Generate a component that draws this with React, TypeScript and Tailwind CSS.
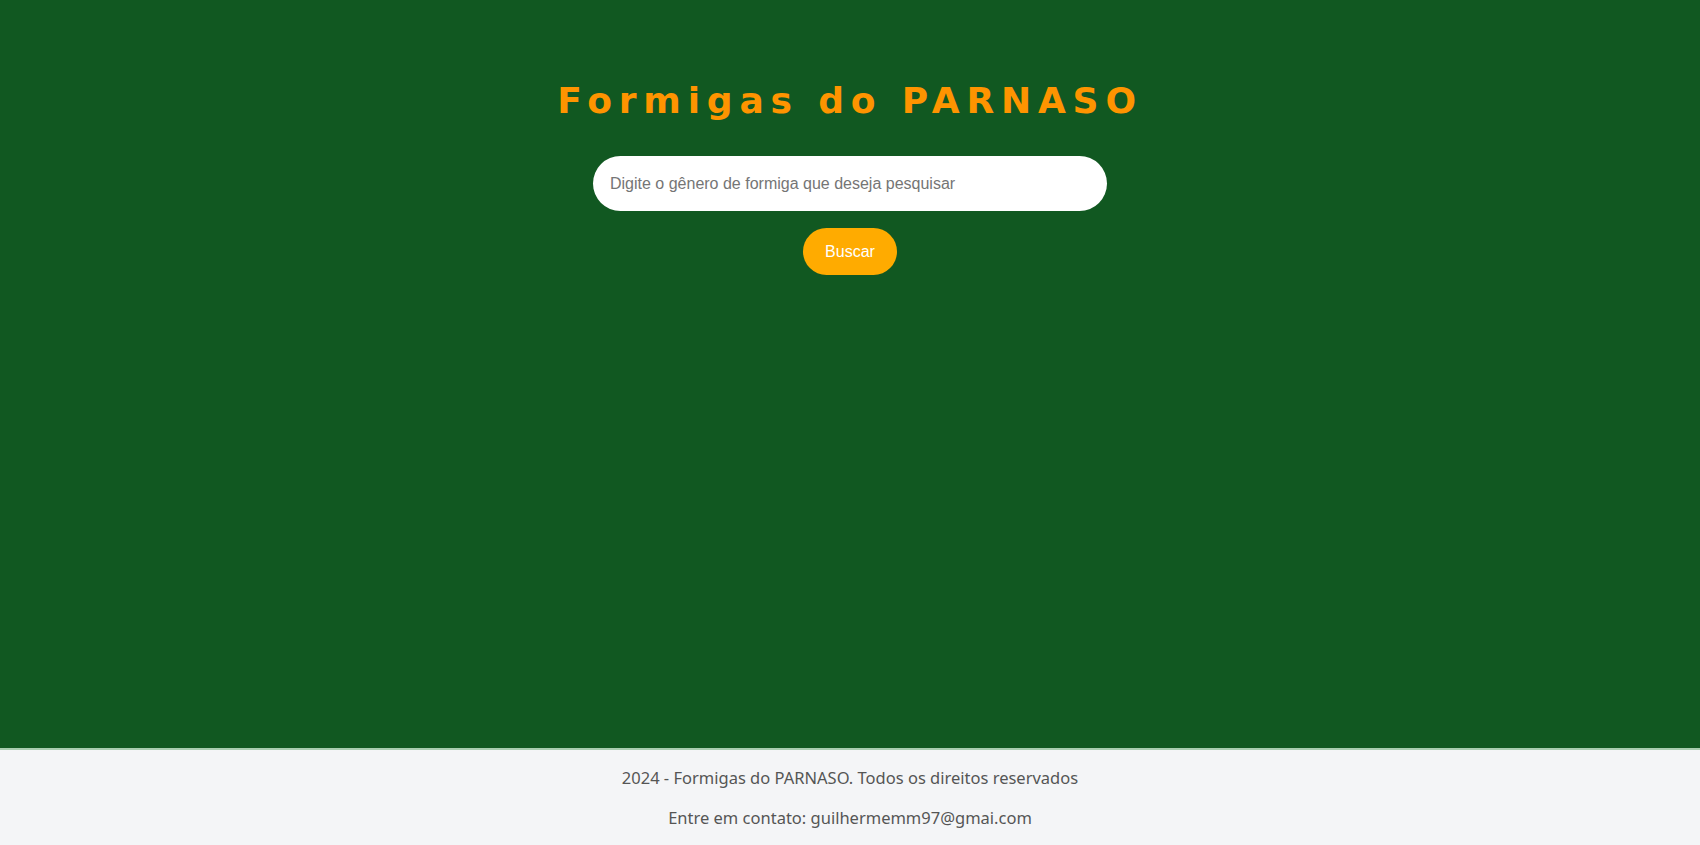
export default function App() {
  return (
    <div className="min-h-screen flex flex-col bg-[#f4f5f7]">
      <main className="h-[748px] bg-[#115821] flex flex-col items-center pt-[79px]">
        <h1 className="font-['DejaVu_Sans',sans-serif] text-[36px] font-bold tracking-[0.19em] text-[#fe9400] leading-[44px]">
          Formigas do PARNASO
        </h1>
        <form className="flex flex-col items-center mt-[33px] font-['Liberation_Sans',Arial,sans-serif]" onSubmit={(e) => e.preventDefault()}>
          <input
            type="text"
            placeholder="Digite o gênero de formiga que deseja pesquisar"
            className="w-[514px] h-[55px] rounded-full bg-white px-[17px] text-base text-gray-800 placeholder:text-[#757575] outline-none"
          />
          <button type="submit" className="mt-[17px] h-[47px] px-[22px] rounded-full bg-[#ffab00] text-white text-base">
            Buscar
          </button>
        </form>
      </main>
      <footer className="border-t-2 border-[#a9cdb0] bg-[#f4f5f7] flex flex-col items-center pt-[16px] gap-[15px] text-[16.5px] text-[#555] h-[97px] font-['Noto_Sans',sans-serif]">
        <p>2024 - Formigas do PARNASO. Todos os direitos reservados</p>
        <p>Entre em contato: guilhermemm97@gmai.com</p>
      </footer>
    </div>
  );
}
